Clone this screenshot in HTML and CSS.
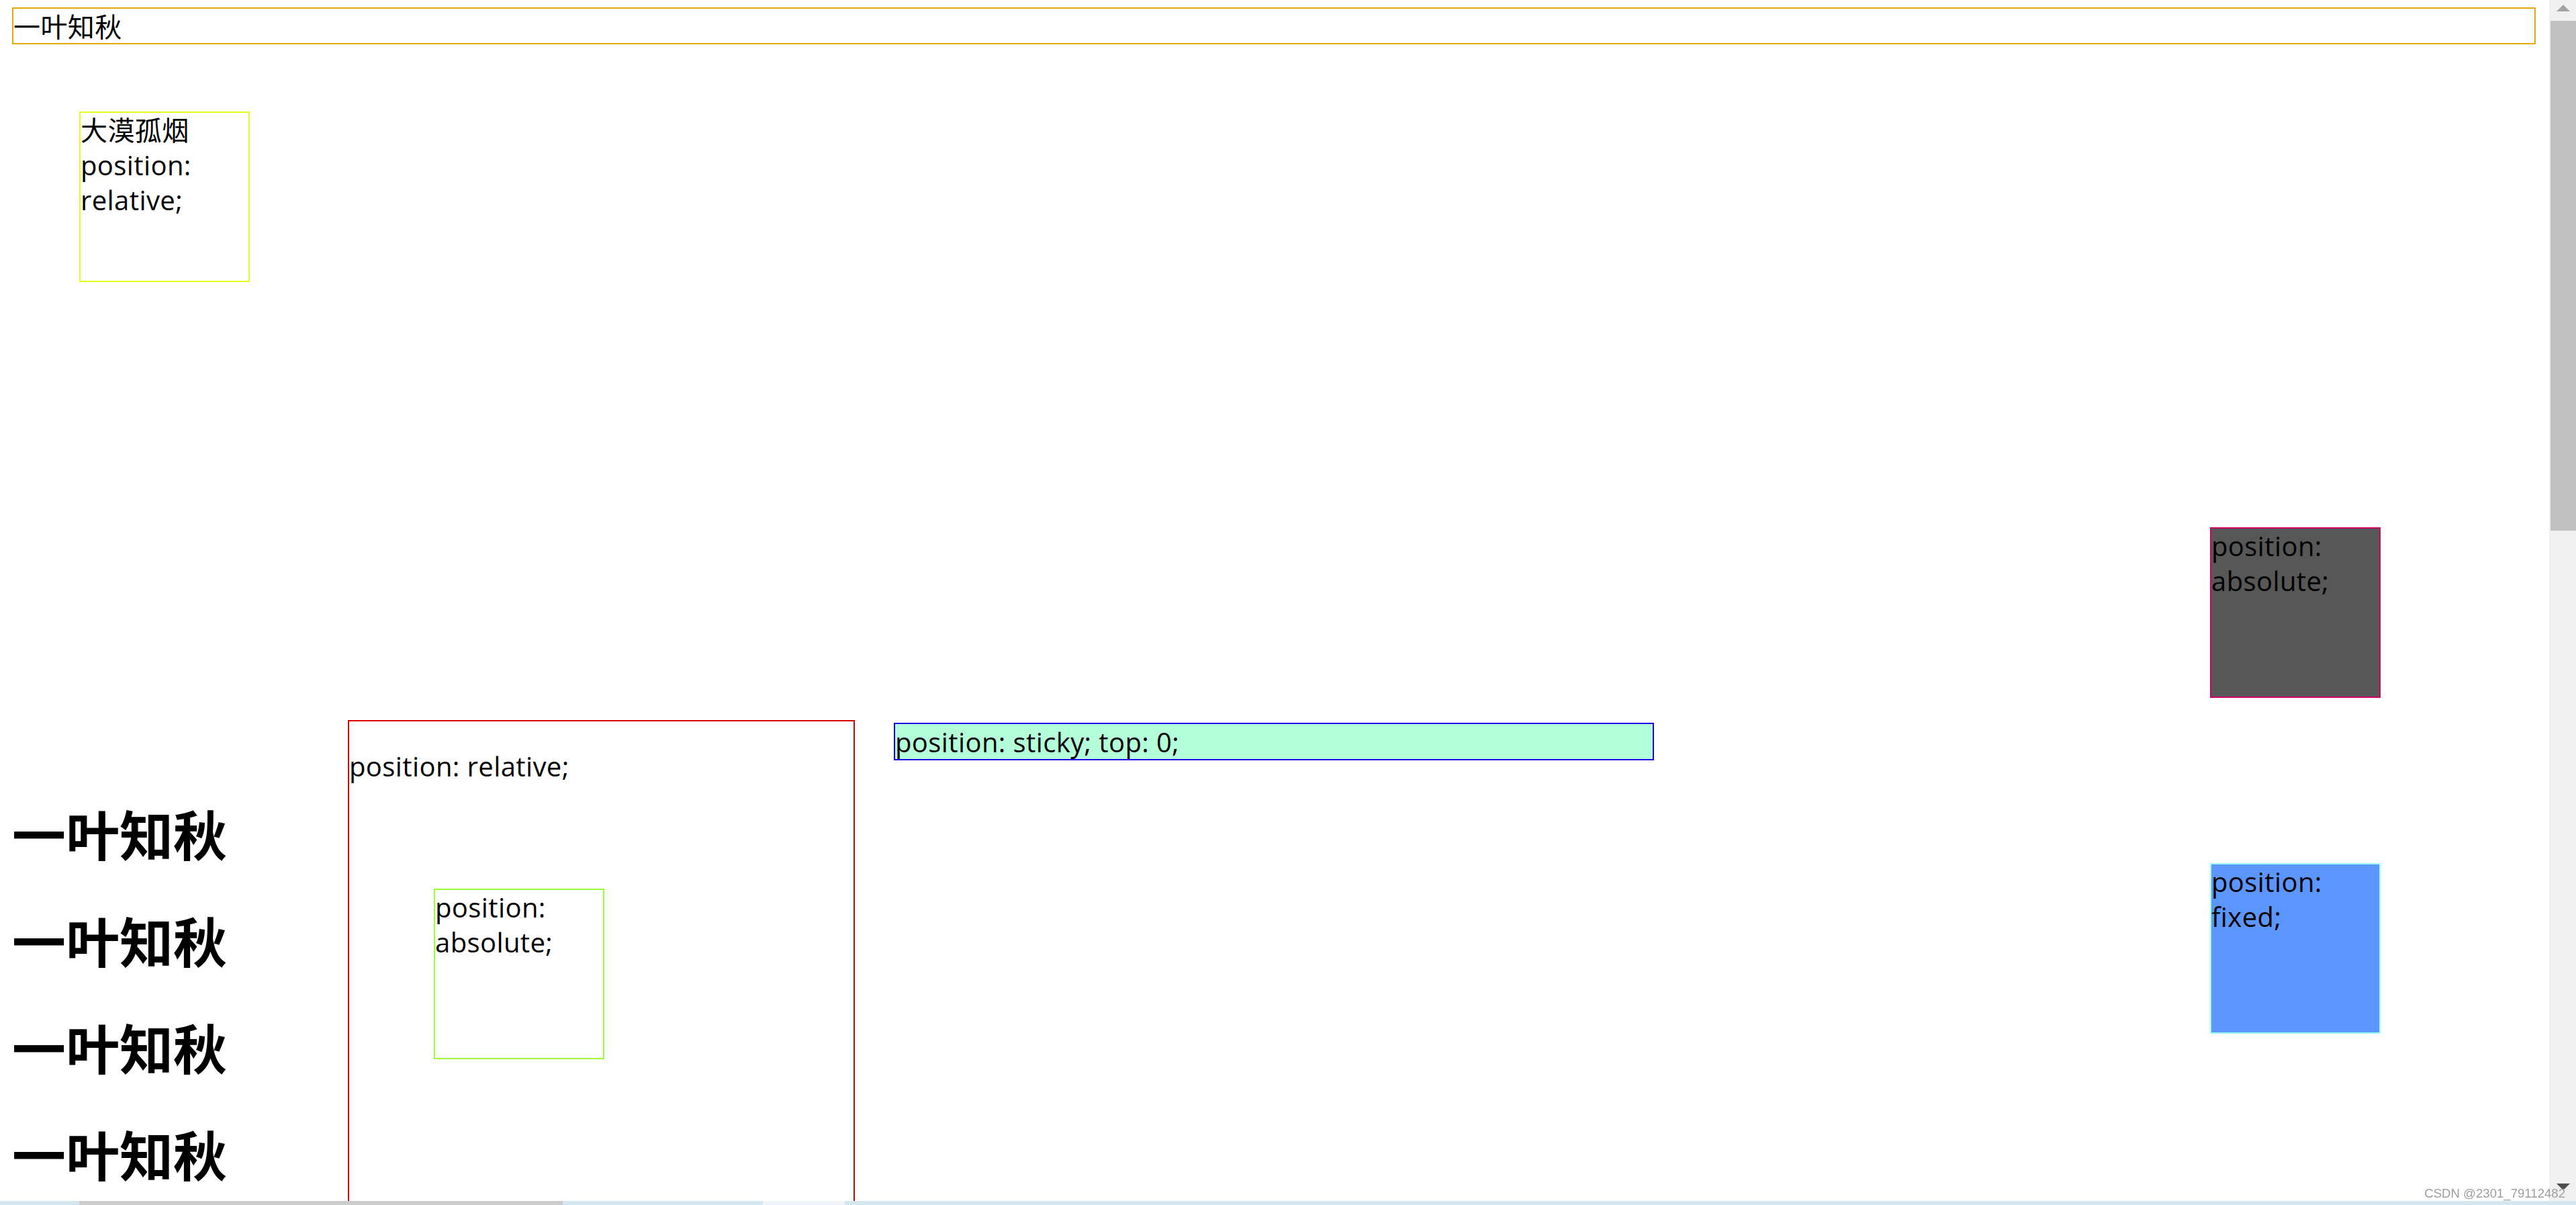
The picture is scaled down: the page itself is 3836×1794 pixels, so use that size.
FILE: index.html
```html
<!DOCTYPE html>
<html lang="zh-CN">
<head>
<meta charset="utf-8">
<title>position demo</title>
<link rel="stylesheet" href="styles.css">
</head>
<body>
<div class="screen">
  <div class="viewport">
    <main class="page">
      <div class="title">一叶知秋</div>
      <div class="rel-box">大漠孤烟 position: relative;</div>
      <div class="abs-box">position: absolute;</div>
      <div class="fixed-box">position: fixed;</div>
      <section class="row">
        <div class="headings">
          <h1>一叶知秋</h1>
          <h1>一叶知秋</h1>
          <h1>一叶知秋</h1>
          <h1>一叶知秋</h1>
        </div>
        <div class="red-box">
          <p>position: relative;</p>
          <div class="green-box">position: absolute;</div>
        </div>
        <div class="sticky-bar">position: sticky; top: 0;</div>
      </section>
    </main>
    <div class="vscroll">
      <span class="arrow-up"></span>
      <span class="thumb"></span>
      <span class="arrow-down"></span>
    </div>
  </div>
  <div class="hstrip"></div>
  <div class="watermark">CSDN @2301_79112482</div>
</div>
</body>
</html>
```

FILE: styles.css
```css
html, body {
  margin: 0;
  padding: 0;
  height: 100%;
  overflow: hidden;
  background: #ffffff;
}

body {
  font-family: "Open Sans", "Noto Sans CJK SC", sans-serif;
  font-size: 40px;
  line-height: 52px;
  letter-spacing: 0.4px;
  color: #000000;
}

.screen {
  position: relative;
  width: 3836px;
  height: 1794px;
  display: flex;
  flex-direction: column;
  overflow: hidden;
}

.viewport {
  flex: 1;
  display: flex;
  min-height: 0;
}

.page {
  flex: 1;
  position: relative;
  overflow: hidden;
  padding: 0 20px 0 18px;
}

.title {
  margin-top: 11px;
  border: 2px solid #e8a90c;
  line-height: 53px;
  height: 51px;
}

.rel-box {
  position: relative;
  top: 100px;
  left: 100px;
  width: 250px;
  height: 250px;
  border: 2px solid #e6ff1f;
}

.abs-box {
  position: absolute;
  top: 785px;
  left: 3291px;
  width: 250px;
  height: 250px;
  background: #575757;
  border: 2px solid #d4006a;
}

.fixed-box {
  position: fixed;
  top: 1285px;
  left: 3291px;
  width: 250px;
  height: 250px;
  background: #5b96ff;
  border: 2px solid #99ffff;
}

.row {
  display: flex;
  align-items: flex-start;
  margin-top: 752px;
}

.headings {
  width: 500px;
  flex-shrink: 0;
  padding-top: 61px;
}

.headings h1 {
  font-size: 80px;
  line-height: 105.6px;
  font-weight: 700;
  letter-spacing: 0;
  margin: 53.6px 0;
  font-family: "Noto Sans CJK SC", sans-serif;
}

.red-box {
  position: relative;
  flex-shrink: 0;
  width: 751px;
  height: 1000px;
  border: 2px solid #dd0000;
}

.red-box p {
  margin: 41px 0;
}

.green-box {
  position: absolute;
  left: 126px;
  top: 249px;
  width: 250px;
  height: 250px;
  border: 2px solid #99ff33;
}

.sticky-bar {
  position: sticky;
  top: 0;
  flex-shrink: 0;
  margin: 4px 0 0 58px;
  width: 1128px;
  height: 52px;
  line-height: 54px;
  border: 2px solid #2200ee;
  background: #b3ffd9;
}

.vscroll {
  width: 40px;
  flex-shrink: 0;
  background: #f0f0f0;
  display: flex;
  flex-direction: column;
  padding-top: 7px;
  box-sizing: border-box;
}

.arrow-up {
  display: block;
  margin-left: 11px;
  width: 0;
  height: 0;
  border-left: 10px solid transparent;
  border-right: 10px solid transparent;
  border-bottom: 10px solid #a3a3a3;
}

.thumb {
  display: block;
  margin: 14px 0 0 2px;
  height: 759px;
  background: #c1c1c1;
}

.arrow-down {
  display: block;
  margin: auto 0 16px 11px;
  width: 0;
  height: 0;
  border-left: 10px solid transparent;
  border-right: 10px solid transparent;
  border-top: 10px solid #4d4d4d;
}

.hstrip {
  height: 6px;
  flex-shrink: 0;
  background: linear-gradient(to right,
    #d5e5ef 0, #d5e5ef 118px,
    #cccccc 118px, #cccccc 838px,
    #d6e6f0 838px, #d6e6f0 1136px,
    #eef4f8 1136px, #eef4f8 1258px,
    #d6e6f0 1258px, #d6e6f0 100%);
}

.watermark {
  position: absolute;
  right: 16px;
  bottom: 8px;
  font-family: "Liberation Sans", Arial, sans-serif;
  font-size: 18.6px;
  line-height: 19px;
  letter-spacing: 0;
  color: #9d9d9d;
  text-shadow: 0 0 1px #ffffff;
}
```
